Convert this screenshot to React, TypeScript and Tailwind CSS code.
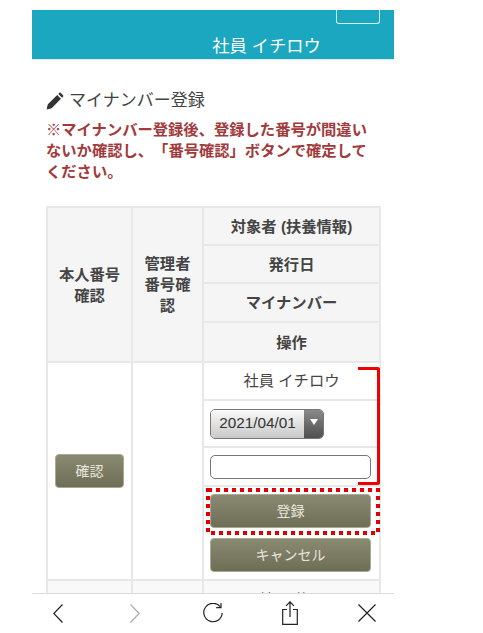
const cjk = "font-['Liberation_Sans','Noto_Sans_CJK_JP',sans-serif]";
const btn =
  "flex items-center justify-center rounded-[4px] border border-[#a9a994] bg-gradient-to-b from-[#8a8a72] to-[#6e6e56] text-[14px] text-[#e6e6dc]";
const th = "border-2 border-[#e8e8e8] bg-[#f5f5f5] text-center text-[15.3px] font-bold leading-[21px] text-[#444]";
const td = "border-2 border-[#e8e8e8] bg-white p-0 text-center";

function Pencil() {
  return (
    <svg viewBox="0 0 24 24" className="-ml-[1px] h-[19px] w-[19px] fill-[#333]">
      <path d="M2 22l1.6-6.4L15.4 3.8l4.8 4.8L8.4 20.4 2 22zM16.8 2.4l1.2-1.2c.6-.6 1.4-.6 2 0l2.8 2.8c.6.6.6 1.4 0 2l-1.2 1.2-4.8-4.8z" />
    </svg>
  );
}

function Back({ color }: { color: string }) {
  return (
    <svg viewBox="0 0 10 19" className={`h-[19px] w-[10px] fill-none stroke-[1.2] ${color}`}>
      <path d="M9.5 0.5L0.8 9.5l8.7 9" />
    </svg>
  );
}

function Reload() {
  return (
    <svg viewBox="0 0 20 20" className="h-[20px] w-[20px] fill-none stroke-[#222] stroke-[1.2]">
      <path d="M17.4 4A9.2 9.2 0 1 0 19.2 10" />
      <path d="M18 0v4.6h-4.8" />
    </svg>
  );
}

function Share() {
  return (
    <svg viewBox="0 0 16 24" className="h-[24px] w-[16px] fill-none stroke-[#222] stroke-[1.2]">
      <path d="M5 8.5H0.7v14.8h14.6V8.5H11" />
      <path d="M8 16V1M4 4.8L8 0.8l4 4" />
    </svg>
  );
}

function Close() {
  return (
    <svg viewBox="0 0 18 18" className="h-[18px] w-[18px] fill-none stroke-[#222] stroke-[1.2]">
      <path d="M0.5 0.5l17 17M17.5 0.5l-17 17" />
    </svg>
  );
}

export default function App() {
  return (
    <div className={`h-[633px] w-[483px] overflow-hidden bg-white ${cjk}`}>
      <div className="relative ml-[32px] h-[633px] w-[362px] overflow-hidden">
        {/* Header */}
        <div className="mt-[10px] flex h-[50px] items-end justify-center border-b border-[#d8eef2] bg-[#1aa7bf] pb-[2px] pl-[107px]">
          <span className="text-[17.3px] leading-[22px] text-white">社員 イチロウ</span>
          <div className="absolute right-[14px] top-[10px] h-[14px] w-[44px] rounded-b-[3px] border-x border-b border-[#d5eef3]" />
        </div>

        {/* Title */}
        <div className="ml-[14px] mt-[30px] flex items-center gap-[5px]">
          <Pencil />
          <h2 className="text-[17px] font-normal leading-[22px] text-[#444]">マイナンバー登録</h2>
        </div>
        <p className="ml-[14px] mt-[7px] whitespace-nowrap text-[15.3px] font-bold leading-[21px] text-[#a23a3c] [text-spacing-trim:space-all]">
          ※マイナンバー登録後、登録した番号が間違い
          <br />
          ないか確認し、「番号確認」ボタンで確定して
          <br />
          ください。
        </p>

        {/* Table */}
        <table className="ml-[14px] mt-[24px] w-[333px] table-fixed border-collapse">
          <colgroup>
            <col className="w-[85px]" />
            <col className="w-[71px]" />
            <col className="w-[177px]" />
          </colgroup>
          <tbody>
            <tr className="h-[38px]">
              <th rowSpan={4} className={th}>
                本人番号
                <br />
                確認
              </th>
              <th rowSpan={4} className={th}>
                管理者
                <br />
                番号確
                <br />
                認
              </th>
              <th className={th}>対象者 (扶養情報)</th>
            </tr>
            <tr className="h-[38px]">
              <th className={th}>発行日</th>
            </tr>
            <tr className="h-[39px]">
              <th className={th}>マイナンバー</th>
            </tr>
            <tr className="h-[40px]">
              <th className={th}>操作</th>
            </tr>
            <tr className="h-[38px]">
              <td rowSpan={4} className={td}>
                <div className={`${btn} mx-auto h-[34px] w-[69px]`}>確認</div>
              </td>
              <td rowSpan={4} className={td} />
              <td className={`${td} text-[15.3px] text-[#444]`}>社員 イチロウ</td>
            </tr>
            <tr className="h-[47px]">
              <td className={td}>
                <div className="ml-[6px] flex h-[30px] w-[114px] overflow-hidden rounded-[5px] border border-[#777]">
                  <div className="flex flex-1 items-center justify-center bg-gradient-to-b from-[#fafafa] to-[#c8c8c8] text-[15.3px] text-[#333]">
                    2021/04/01
                  </div>
                  <div className="flex w-[19px] justify-center bg-gradient-to-b from-[#8a8a8a] to-[#4f4f4f] pt-[9px]">
                    <div className="h-0 w-0 border-x-[4px] border-t-[6px] border-x-transparent border-t-white" />
                  </div>
                </div>
              </td>
            </tr>
            <tr className="h-[39px]">
              <td className={td}>
                <div className="ml-[6px] h-[24px] w-[161px] rounded-[5px] border border-[#777] bg-white" />
              </td>
            </tr>
            <tr className="h-[94px]">
              <td className={`${td} align-top`}>
                <div className={`${btn} ml-[6px] mt-[7px] h-[34px] w-[161px]`}>登録</div>
                <div className={`${btn} ml-[6px] mt-[10px] h-[34px] w-[161px]`}>キャンセル</div>
              </td>
            </tr>
            <tr className="h-[40px]">
              <td className="border-2 border-[#e8e8e8] bg-[#f9f9f9]" />
              <td className="border-2 border-[#e8e8e8] bg-[#f9f9f9]" />
              <td className="border-2 border-[#e8e8e8] bg-[#f9f9f9] pt-[8px] align-top text-center text-[15.3px] text-[#444]">
                社員 花子
              </td>
            </tr>
          </tbody>
        </table>

        {/* Annotations */}
        <div className="absolute left-[326px] top-[367px] h-[118px] w-[22px] rounded-r-[3px] border-y-[3px] border-r-[3px] border-[#f00000]" />
        <svg viewBox="0 0 174 47" className="absolute left-[174px] top-[488px] h-[47px] w-[174px] fill-none stroke-[#e00000] stroke-[4]">
          <rect x="2" y="2" width="170" height="43" strokeDasharray="4 4" />
        </svg>

        {/* Browser toolbar */}
        <div className="absolute bottom-0 left-0 right-0 flex h-[40px] items-center gap-[57.3px] border-t border-[#dcdcdc] bg-white pb-[1px] pl-[16px]">
          <div className="flex w-[20px] justify-center">
            <Back color="stroke-[#222]" />
          </div>
          <div className="flex w-[20px] justify-center">
            <div className="rotate-180">
              <Back color="stroke-[#aaa]" />
            </div>
          </div>
          <div className="flex w-[20px] justify-center">
            <Reload />
          </div>
          <div className="flex w-[20px] justify-center">
            <Share />
          </div>
          <div className="flex w-[20px] justify-center">
            <Close />
          </div>
        </div>
      </div>
    </div>
  );
}
